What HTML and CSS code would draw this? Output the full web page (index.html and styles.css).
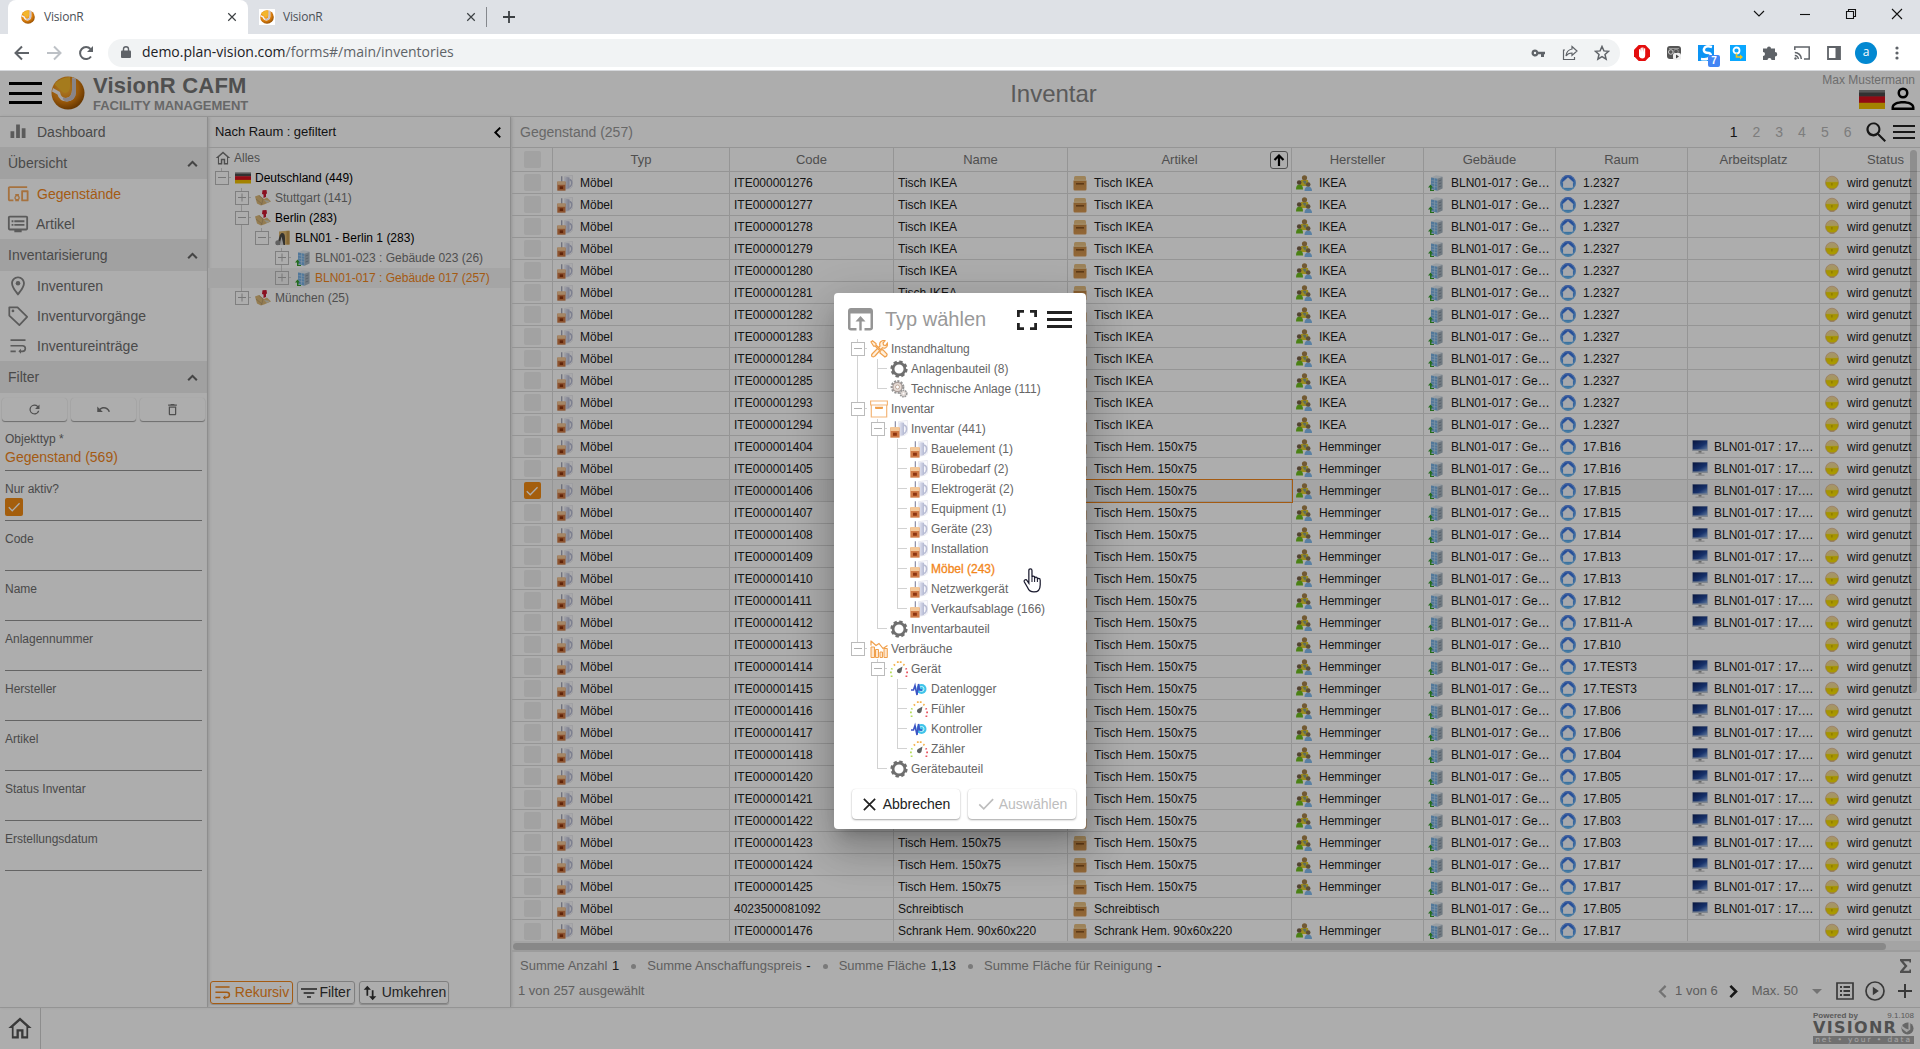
FILE: index.html
```html
<!DOCTYPE html>
<html lang="de">
<head>
<meta charset="utf-8">
<title>VisionR</title>
<link rel="stylesheet" href="styles.css">
</head>
<body>
<svg width="0" height="0" class="defs" aria-hidden="true">
  <defs>
    <radialGradient id="gOrb" cx=".4" cy=".35" r=".7"><stop offset="0" stop-color="#ffb83e"/><stop offset=".6" stop-color="#e0820f"/><stop offset="1" stop-color="#8e4a00"/></radialGradient>
    <linearGradient id="gBlue" x1="0" y1="0" x2="0" y2="1"><stop offset="0" stop-color="#2f62e0"/><stop offset="1" stop-color="#5cb6ee"/></linearGradient>
    <linearGradient id="gYel" x1="0" y1="0" x2="0" y2="1"><stop offset="0" stop-color="#f3d9a0"/><stop offset=".4" stop-color="#f6e08a"/><stop offset=".5" stop-color="#f2d800"/><stop offset="1" stop-color="#ffe800"/></linearGradient>
    <linearGradient id="gBox" x1="0" y1="0" x2="0" y2="1"><stop offset="0" stop-color="#c98c47"/><stop offset="1" stop-color="#d99a52"/></linearGradient>
    <linearGradient id="gScr" x1="0" y1="0" x2="1" y2="1"><stop offset="0" stop-color="#0c1f5c"/><stop offset=".6" stop-color="#234a9e"/><stop offset="1" stop-color="#8fb4e8"/></linearGradient>
    <linearGradient id="gSilver" x1="0" y1="0" x2="1" y2="0"><stop offset="0" stop-color="#f0f1fa"/><stop offset="1" stop-color="#b3b8d2"/></linearGradient>
  </defs>
  <symbol id="orb" viewBox="0 0 34 34"><circle cx="17" cy="17" r="16.500" fill="url(#gOrb)"/><path d="M2 12 9 16q1 6 6 6 6-1 6-8V1.500l4 1.300V16q-1 9-9 9.500Q8 25 6.500 18.500L1 15.500z" fill="#f3f1f4"/><path d="M21 2v12q0 7-6 8-2 0-3-1-1 4 4 4.500 9-1 9-9.500V3z" fill="#c9c3ca"/><path d="M3.500 8.500Q8 2 19 1v9q0 6-5 7-3-1-4.500-3z" fill="#f3b62c"/></symbol>
  <symbol id="flag" viewBox="0 0 16 11"><path d="M0 0h16v4H0z" fill="#4a4a4a"/><path d="M0 3.700h16v4H0z" fill="#d8101c"/><path d="M0 7.400h16V11H0z" fill="#f0c000"/><path d="M0 0h16v1.500H0z" fill="#fff" opacity=".3"/></symbol>
  <symbol id="mug" viewBox="0 0 16 16"><path d="M7.500 1.500 15.500.3v11.200l-2 2-6 1z" fill="#fafafd" stroke="#dcdce4" stroke-width=".5"/><path d="M7 2.500q3-1 5.500 0V13q-2.500 1.500-5.500.5z" fill="url(#gSilver)"/><path d="M12.500 4.500c3.500 1 2.500 6.500 0 7.500" fill="none" stroke="#b9bdd4" stroke-width="1.400"/><path d="M4.200 1.200h1.100v6H4.200z" fill="#8f91a8"/><path d="M.3 6.800h8.200v8.900H.3z" fill="#cf7a45"/><path d="M.3 6.300h8.200v3.500H.3z" fill="#f4c797"/><path d="M2.700 11.300h3.400v2.700H2.700z" fill="#8e3510"/></symbol>
  <symbol id="box" viewBox="0 0 16 16"><path d="M2 3q0-2 1.500-2h9Q14 1 14 3v3H2z" fill="#e8c184"/><path d="M1.500 5.500h13V14q0 1.500-1.300 1.500H2.800Q1.500 15.500 1.500 14z" fill="url(#gBox)"/><path d="M4 8h8v1.600H4z" fill="#8a5522"/><path d="M2 4.700h12v1H2z" fill="#f3d7a4"/></symbol>
  <symbol id="people" viewBox="0 0 16 16"><path d="M5 5h7l1 6H4z" fill="#e6cf2e"/><circle cx="8.500" cy="2.800" r="2.600" fill="#a9854a"/><path d="M0 14.500q0-5 3.500-5T7 14.500z" fill="#6fbf1e"/><circle cx="3.200" cy="7.500" r="2.300" fill="#7a6248"/><path d="M8.500 16q0-4.500 3.700-4.500T16 16z" fill="#84bdf0"/><circle cx="12.200" cy="9.500" r="2.300" fill="#8a7350"/><path d="M6.500 6h3.800l-1 4z" fill="#8aa38e"/></symbol>
  <symbol id="building" viewBox="0 0 16 16"><path d="M3 2.500 8 .3l6.500 1v12l-5 2.500L3 14z" fill="#e2e9ef"/><path d="M3 2.500 9.500 3.700v12L3 14z" fill="#78b2e4"/><path d="M9.500 3.700 14.500 2v11.500l-5 2.200z" fill="#a5b3bf"/><path d="M3.500 5.500l6 1M3.500 8.200l6 1M3.500 11l6 1M6.500 3v11.500" stroke="#c6dff4" stroke-width=".6"/><path d="M10.500 6l2.800-1M10.500 9l2.800-1M10.500 12l2.800-1" stroke="#7a8a98" stroke-width=".8"/><path d="M2.500 9.500 5 12.500H3.500V15H6v1H2v-3.500H0z" fill="#35a02c"/></symbol>
  <symbol id="room" viewBox="0 0 16 16"><circle cx="8" cy="8" r="7.900" fill="url(#gBlue)"/><circle cx="8" cy="8" r="7.200" fill="none" stroke="#8fc3f5" stroke-width=".6"/><path d="M8 2.800 13.200 7.600H12.400V12.300H3.600V7.600H2.800z" fill="#f4f8ff" stroke="#f4f8ff" stroke-width="1" stroke-linejoin="round"/></symbol>
  <symbol id="bulb" viewBox="0 0 16 16"><circle cx="8" cy="7.700" r="6.500" fill="url(#gYel)" stroke="#dca878" stroke-width=".6"/><path d="M7.300 8h1.200v2.500H7.300z" fill="#c9ab00"/><path d="M5 13.500h6l-1 1.200H6z" fill="#d8b48c"/></symbol>
  <symbol id="monitor" viewBox="0 0 16 16"><path d="M.2 1h15.600v11H.2z" fill="#b9c3d2"/><path d="M.8 1.500h14.400v9H.8z" fill="url(#gScr)"/><path d="M6.500 12h3v2h-3z" fill="#9a9a9a"/><path d="M3.500 13.500h9V15h-9z" fill="#d5d5d5"/></symbol>
  <symbol id="pinmap" viewBox="0 0 16 16"><path d="M0 6.500 4 5l5 4 3-1.500 4 4-7 3-3 1-4-2z" fill="#dcb878"/><path d="m4 5.500 4 3.500-1.500 6M1 9l6 5" stroke="#b39c70" stroke-width=".8" fill="none"/><path d="m9 10 6 1-3 2z" fill="#d4d4c6"/><path d="M7.500.3 11.500 0l.5 3.500-1 .5v3L8.500 8V4.500L7 4z" fill="#cc1930"/></symbol>
  <symbol id="site" viewBox="0 0 16 16"><path d="M4 1.500 14.500.5v14L4 15z" fill="#e0b970"/><path d="M11.500 1h3v13.500h-3z" fill="#c59a50"/><path d="M6.500 3q3.500-.5 3.500 5v7H1q2.500-3 3-7 .5-3.500 2.500-5z" fill="#4d4a45"/><path d="M6.500 6.500 8.500 15h-4z" fill="#d8d8d8"/><circle cx="2.800" cy="12.700" r="2.500" fill="#8f8f8f"/></symbol>
  <symbol id="home" viewBox="0 0 24 24"><path d="M12 3 2 12h3v9h6v-6h2v6h6v-9h3zM12 5.700l5.500 5V19H15v-6H9v6H6.500v-8.300z"/></symbol>
  <symbol id="all" viewBox="1 1 22 22"><path d="M12 3 2 12h3v9h6v-6h2v6h6v-9h3zM12 5.700l5.500 5V19H15v-6H9v6H6.500v-8.300z"/></symbol>
  <symbol id="bars" viewBox="0 0 24 24"><path d="M2 11h5v9H2zM9.500 2h5v18h-5zM17 7h5v13h-5z"/></symbol>
  <symbol id="devices" viewBox="0 0 24 24"><path d="M3 5.500h19v-2H3c-1.100 0-2 .9-2 2V18c0 1.100.9 2 2 2h4v-2H3zM13 12H9v1.780c-.61.550-1 1.330-1 2.220s.39 1.670 1 2.220V20h4v-1.780c.61-.550 1-1.340 1-2.220s-.39-1.670-1-2.220zm-2 5.500c-.83 0-1.500-.67-1.500-1.500s.67-1.500 1.500-1.500 1.500.67 1.500 1.500-.67 1.500-1.500 1.500zM22.500 8h-6c-.5 0-1 .5-1 1v10c0 .5.500 1 1 1h6c.5 0 1-.5 1-1V9c0-.5-.5-1-1-1zm-1 10h-4v-8h4z"/></symbol>
  <symbol id="dvr" viewBox="0 0 24 24"><path d="M21 3H3c-1.100 0-2 .9-2 2v12c0 1.100.9 2 2 2h5v2h8v-2h5c1.100 0 2-.9 2-2V5c0-1.100-.9-2-2-2zm0 14H3V5h18zm-2-9H8v2h11zm0 4H8v2h11zM7 8H5v2h2zm0 4H5v2h2z"/></symbol>
  <symbol id="place" viewBox="0 0 24 24"><path d="M12 1.500C7.800 1.500 4.500 4.800 4.500 9c0 5.500 7.500 13.500 7.500 13.500S19.500 14.500 19.500 9c0-4.200-3.300-7.500-7.500-7.500zM6.500 9c0-3 2.500-5.500 5.500-5.500s5.500 2.500 5.500 5.500c0 3-3 7.200-5.500 10.300C9.500 16.200 6.500 12 6.500 9z"/><circle cx="12" cy="9" r="2.500"/></symbol>
  <symbol id="tag" viewBox="0 0 24 24"><path d="M2.500 2.500h9L22 13l-8.500 9L2.500 11.500z" fill="none" stroke="currentColor" stroke-width="1.900" stroke-linejoin="round"/><circle cx="6.500" cy="6.500" r="1.500"/></symbol>
  <symbol id="wrap" viewBox="0 0 24 24"><path d="M2 3h20v2.200H2zM2 18h7v2.200H2zM2 10.500h16a4.400 4.400 0 0 1 0 9.700H16v2l-3.500-3.200 3.500-3.200v2.200h2a2.200 2.200 0 0 0 0-5.300H2z"/></symbol>
  <symbol id="up" viewBox="0 0 24 24"><path d="m4 17 8-8 8 8" fill="none" stroke="currentColor" stroke-width="3.800"/></symbol>
  <symbol id="left" viewBox="0 0 24 24"><path d="m17 3-9 9 9 9" fill="none" stroke="currentColor" stroke-width="3.600"/></symbol>
  <symbol id="right" viewBox="0 0 24 24"><path d="m7 3 9 9-9 9" fill="none" stroke="currentColor" stroke-width="4.200"/></symbol>
  <symbol id="refresh" viewBox="0 0 24 24"><path d="M17.650 6.350A8 8 0 1 0 19.730 14h-2.080A6 6 0 1 1 12 6c1.660 0 3.140.69 4.220 1.780L13 11h7V4z"/></symbol>
  <symbol id="undo" viewBox="0 0 24 24"><path d="M12.500 8c-2.650 0-5.050.99-6.900 2.600L2 7v9h9l-3.620-3.620c1.390-1.160 3.160-1.880 5.120-1.880 3.540 0 6.550 2.310 7.600 5.500l2.370-.78C21.080 11.030 17.150 8 12.500 8z"/></symbol>
  <symbol id="trash" viewBox="0 0 24 24"><path d="M6 19c0 1.100.9 2 2 2h8c1.100 0 2-.9 2-2V7H6zM8 9h8v10H8zm7.500-5-1-1h-5l-1 1H5v2h14V4z"/></symbol>
  <symbol id="check" viewBox="0 0 24 24"><path d="m3 12.500 6 6L21.500 5.500" fill="none" stroke="currentColor" stroke-width="2.200"/></symbol>
  <symbol id="search" viewBox="0 0 24 24"><path d="M15.500 14h-.8a7 7 0 1 0-.7.700v.8l6.500 6.500 1.500-1.500zM9.500 14a4.900 4.900 0 1 1 0-9.800 4.900 4.900 0 0 1 0 9.800z"/></symbol>
  <symbol id="person" viewBox="0 0 24 24"><path d="M12 .5a5.500 5.500 0 1 0 0 11 5.500 5.500 0 0 0 0-11zM12 3a3 3 0 1 1 0 6 3 3 0 0 1 0-6zM.5 23v-2.500c0-4.500 6-6.500 11.500-6.500s11.500 2 11.500 6.500V23zM3 20.500h18c0-2.500-4-4-9-4s-9 1.500-9 4z"/></symbol>
  <symbol id="filter" viewBox="0 0 24 16"><path d="M0 1h24v2.200H0zM4 7h16v2.200H4zM9 13h6v2.200H9z"/></symbol>
  <symbol id="swap" viewBox="0 0 24 24"><path d="M8 1 2.500 7H6.700v9h2.600V7h4.200zM16 23l5.500-6h-4.200V8h-2.600v9h-4.200z"/></symbol>
  <symbol id="openin" viewBox="0 0 25 23"><path d="M22 0H3C1.300 0 0 1.300 0 3v17c0 1.500 1.300 2.500 3 2.500h5.500V20H2.500V5.500h20V20h-6v2.500H22c1.700 0 3-1 3-2.500V3c0-1.700-1.300-3-3-3zM12.500 8 7.500 13.500h3.800V22.500h2.400V13.500h3.800z"/></symbol>
  <symbol id="full" viewBox="0 0 20 20"><path d="M0 0h7v2.800H2.800V7H0zM13 0h7v7h-2.800V2.800H13zM0 13h2.800v4.200H7V20H0zM17.200 13H20v7h-7v-2.800h4.200z"/></symbol>
  <symbol id="close" viewBox="0 0 24 24"><path d="M3 3 21 21M21 3 3 21" fill="none" stroke="currentColor" stroke-width="2.800"/></symbol>
  <symbol id="tools" viewBox="0 0 18 18"><g fill="#fff0dd" stroke="#f0a04c" stroke-width="1.200"><path d="M11 1.500q2-1.500 4-.8L13 3l.5 2 2.200.5L17.300 3q.7 4-2 5-1.500.5-2.800-.2L5 16q-1.200 1.500-3 .5-1-1.500.5-3L10 6Q9 3 11 1.500z"/><path d="m1 2 1.500-1.200L6 3.500 6 5l5 5 1.800-.3L17 14q.5 2-2 3l-5-4 .2-1.800-5-5H3.700z"/></g></symbol>
  <symbol id="gear" viewBox="0 0 18 18"><circle cx="9" cy="9" r="7" fill="none" stroke="#6f6f6f" stroke-width="3.200" stroke-dasharray="3.200 2.298"/><circle cx="9" cy="9" r="5.900" fill="none" stroke="#6f6f6f" stroke-width="2.700"/></symbol>
  <symbol id="gears" viewBox="0 0 18 18"><circle cx="7.500" cy="7" r="5.600" fill="none" stroke="#959595" stroke-width="2.600" stroke-dasharray="2 1.200"/><circle cx="7.500" cy="7" r="4.600" fill="#e6dcd6" stroke="#a89c98" stroke-width="1.200"/><circle cx="7.500" cy="7" r="2" fill="#fff" stroke="#b49a8a" stroke-width=".8"/><circle cx="13.500" cy="13.500" r="3.300" fill="#ded6d2" stroke="#979797" stroke-width="1.600" stroke-dasharray="1.600 .8"/><circle cx="13.500" cy="13.500" r="1" fill="#fff"/></symbol>
  <symbol id="archive" viewBox="0 0 18 18"><path d="M.6 1h16.800v4H.6zM1.300 5h15.400v12H1.300z" fill="#fff" stroke="#f3b678" stroke-width="1.200"/><path d="M5 6.800h8v1.500q0 .7-1 .7H6q-1 0-1-.7z" fill="#f0a04c"/></symbol>
  <symbol id="chart" viewBox="0 0 18 18"><path d="M1 7h3.500v10.500H1zM5.500 9.500h3v8h-3zM10 12h2.500v5.500H10zM14 8.500h3.300v9H14z" fill="#ffe6cc" stroke="#f0a04c"/><path d="M1 .5v5M1 1l5 4.500L9 3.500l4 5 4.500-3" fill="none" stroke="#f0a04c" stroke-width="1.200"/></symbol>
  <symbol id="gauge" viewBox="0 0 18 18"><path d="M1.600 17v-1.600M.9 13.300v-1.800M1.600 9.500l.4-1.300" stroke="#b5dc5a" stroke-width="1.800"/><path d="M3.800 5.500 5 4.300M7.800 3V1.200M10.700 3V1.200M13.300 4.300l1.200 1" stroke="#f6b24e" stroke-width="1.800"/><path d="M16 8.200l.4 1.300M17.100 11.500v1.800M16.400 15.400V17" stroke="#ea5560" stroke-width="1.800"/><path d="m12.500 6.500-1 5A2.300 2.300 0 1 1 8 9z" fill="#5d6061"/></symbol>
  <symbol id="pulse" viewBox="0 0 18 18"><circle cx="11.500" cy="9" r="5" fill="#3fc4ea"/><circle cx="11.500" cy="9" r="2.500" fill="none" stroke="#c8f2fb"/><path d="M1 10h2.500L5 5.500l2 9.500 1.500-11 1 6H12" fill="none" stroke="#3b53c4" stroke-width="1.600"/></symbol>
</svg>

<div class="browser">
  <div class="tabstrip">
    <div class="tab active"><svg class="fav"><use href="#orb"/></svg><span class="tab-title">VisionR</span><svg class="x"><use href="#close"/></svg></div>
    <div class="tab"><span class="favbg"><svg class="fav"><use href="#orb"/></svg></span><span class="tab-title">VisionR</span><svg class="x"><use href="#close"/></svg></div>
    <i class="tabsep"></i>
    <svg class="plus" viewBox="0 0 12 12"><path d="M6 0v12M0 6h12" stroke="#3c4043" stroke-width="1.800"/></svg>
    <div class="wincontrols">
      <svg width="12" height="12" viewBox="0 0 12 12"><path d="m1 3 5 5 5-5"/></svg>
      <svg width="12" height="12" viewBox="0 0 12 12"><path d="M1 6.500h10"/></svg>
      <svg width="12" height="12" viewBox="0 0 12 12"><path d="M1.500 3.500h7v7h-7zM3.500 3.500v-2h7v7h-2"/></svg>
      <svg width="12" height="12" viewBox="0 0 12 12"><path d="m1 1 10 10M11 1 1 11"/></svg>
    </div>
  </div>
  <div class="toolbar">
    <div class="nav">
      <svg width="16" height="16" viewBox="0 0 16 16"><path d="M15 8H2M8 1.500 1.500 8 8 14.500" fill="none" stroke="#5f6368" stroke-width="2"/></svg>
      <svg width="16" height="16" viewBox="0 0 16 16"><path d="M1 8h13M8 1.500 14.500 8 8 14.500" fill="none" stroke="#bdc1c6" stroke-width="2"/></svg>
      <svg width="16" height="16" viewBox="0 0 16 16"><path d="M13 11.500A6 6 0 1 1 12.500 4" fill="none" stroke="#5f6368" stroke-width="2"/><path d="M15 1v6H9z" fill="#5f6368"/></svg>
    </div>
    <div class="url">
      <svg width="10" height="12" viewBox="0 0 10 12"><path d="M1 4.500h8q1 0 1 1V11q0 1-1 1H1q-1 0-1-1V5.500q0-1 1-1z" fill="#5f6368"/><path d="M2.500 5V3q0-2.200 2.500-2.200T7.500 3v2" fill="none" stroke="#5f6368" stroke-width="1.400"/></svg>
      <span class="addr">demo.plan-vision.com<span>/forms#/main/inventories</span></span>
      <div class="urlicons">
        <svg width="16" height="16" viewBox="0 0 16 16"><path d="M5 4.500A3.500 3.500 0 1 0 8.300 9.300H11V12h3V9.300h1V6.700H8.300A3.500 3.500 0 0 0 5 4.500zm0 2.300a1.200 1.200 0 1 1 0 2.400 1.200 1.200 0 0 1 0-2.400z" fill="#5f6368"/></svg>
        <svg width="16" height="16" viewBox="0 0 16 16"><path d="M3 5H1.500v9.500h11V12M10 1.500l5 4.500-5 4.500V8Q6 8 4 11q.5-6 6-7z" fill="none" stroke="#5f6368" stroke-width="1.200"/></svg>
        <svg width="16" height="16" viewBox="0 0 16 16"><path d="m8 1.500 1.900 4.400 4.700.4L11 9.400l1.100 4.700L8 11.600l-4.100 2.500L5 9.400 1.400 6.300l4.700-.4z" fill="none" stroke="#5f6368" stroke-width="1.500"/></svg>
      </div>
    </div>
    <div class="exts">
      <svg width="16" height="16" viewBox="0 0 16 16"><path d="M4.700 0h6.600L16 4.700v6.600L11.300 16H4.700L0 11.300V4.700z" fill="#e40d0d"/><path d="M5 8V4.500q.7-.8 1.300 0V7l.3-4q.7-.8 1.300 0V7l.3-4.300q.7-.7 1.300 0L9.700 7l.3-3.500q.7-.6 1.200 0V10q0 3.500-3 3.500-2 0-3.200-2z" fill="#fff"/></svg>
      <svg width="16" height="16" viewBox="0 0 16 16"><rect x="1" y="1" width="14" height="13" rx="3" fill="#555"/><circle cx="4.800" cy="7" r="2.300" fill="none" stroke="#ccc"/><circle cx="10" cy="6.500" r="2.300" fill="none" stroke="#999"/><path d="M3 3.500h10" stroke="#999"/><rect x="7" y="8" width="8" height="7" rx="2" fill="#eee"/><path d="m10 9.500 3 2-3 2z" fill="#444"/></svg>
      <span class="badged"><svg width="16" height="16" viewBox="0 0 16 16"><path d="M0 0h16v16H0z" fill="#0c94f4"/><path d="M14 2Q7 0 6 4t5 4q3 1 1 4t-9 2" fill="none" stroke="#fff" stroke-width="2.500"/></svg><b>7</b></span>
      <svg width="16" height="16" viewBox="0 0 16 16"><path d="M0 0h16v16H0z" fill="#0aa7ff"/><circle cx="6.500" cy="5.500" r="3" fill="none" stroke="#fff" stroke-width="1.800"/><path d="M6.500 8.500V12H11" fill="none" stroke="#f5c518" stroke-width="1.600"/><path d="m10 9.500 3 2.500-3 2.500z" fill="#f5c518"/></svg>
      <svg width="16" height="16" viewBox="0 0 16 16"><path d="M5 3.500a2 2 0 0 1 4 0h4V7a2 2 0 0 1 0 4.500V15H9.500a2 2 0 0 0-4 0H1v-4a2 2 0 0 0 0-4V3.500z" fill="#5f6368"/></svg>
      <svg width="16" height="16" viewBox="0 0 16 16"><path d="M.8 5V2h14.400v12H10M.8 7.500A6.500 6.500 0 0 1 7.300 14M.8 10.500A3.500 3.500 0 0 1 4.300 14" fill="none" stroke="#5f6368" stroke-width="1.500"/><circle cx="1.500" cy="13.500" r="1.200" fill="#5f6368"/></svg>
      <svg width="16" height="16" viewBox="0 0 16 16"><path d="M2 2h12v12H2z" fill="none" stroke="#5f6368" stroke-width="1.800"/><path d="M9.500 2H14v12H9.500z" fill="#5f6368"/></svg>
      <span class="avatar">a</span>
      <svg width="4" height="16" viewBox="0 0 4 16"><g fill="#5f6368"><circle cx="2" cy="3" r="1.600"/><circle cx="2" cy="8" r="1.600"/><circle cx="2" cy="13" r="1.600"/></g></svg>
    </div>
  </div>
</div>

<div class="app">
  <header class="head">
    <i class="burger big"></i>
    <svg class="logo"><use href="#orb"/></svg>
    <div class="brand"><b>VisionR CAFM</b><span>FACILITY MANAGEMENT</span></div>
    <h1>Inventar</h1>
    <div class="user"><span>Max Mustermann</span><div><svg class="uflag" viewBox="0 0 16 11" preserveAspectRatio="none"><use href="#flag" width="16" height="11"/></svg><svg class="uicon"><use href="#person"/></svg></div></div>
  </header>

  <div class="cols">
    <aside class="side">
      <a class="item"><svg><use href="#bars"/></svg>Dashboard</a>
      <div class="section">Übersicht<svg><use href="#up"/></svg></div>
      <a class="item on wide"><svg><use href="#devices"/></svg>Gegenstände</a>
      <a class="item wide art"><svg><use href="#dvr"/></svg>Artikel</a>
      <div class="section">Inventarisierung<svg><use href="#up"/></svg></div>
      <a class="item wide"><svg><use href="#place"/></svg>Inventuren</a>
      <a class="item wide"><svg><use href="#tag"/></svg>Inventurvorgänge</a>
      <a class="item"><svg><use href="#wrap"/></svg>Inventureinträge</a>
      <div class="section">Filter<svg><use href="#up"/></svg></div>
      <div class="fbtns"><button><svg><use href="#refresh"/></svg></button><button><svg><use href="#undo"/></svg></button><button><svg><use href="#trash"/></svg></button></div>
      <div class="field"><label>Objekttyp *</label><span class="val">Gegenstand (569)</span></div>
      <div class="field"><label>Nur aktiv?</label><span class="cb on"><svg><use href="#check"/></svg></span></div>
      <div class="field"><label>Code</label></div>
      <div class="field"><label>Name</label></div>
      <div class="field"><label>Anlagennummer</label></div>
      <div class="field"><label>Hersteller</label></div>
      <div class="field"><label>Artikel</label></div>
      <div class="field"><label>Status Inventar</label></div>
      <div class="field"><label>Erstellungsdatum</label></div>
    </aside>

    <section class="rooms">
      <div class="bar">Nach Raum : gefiltert<svg><use href="#left"/></svg></div>
      <div class="tree" id="roomTree"></div>
      <div class="rbtns">
        <button class="on"><svg width="17" height="17"><use href="#wrap"/></svg>Rekursiv</button>
        <button class="f"><svg width="16" height="12"><use href="#filter"/></svg>Filter</button>
        <button class="u"><svg width="16" height="16"><use href="#swap"/></svg>Umkehren</button>
      </div>
    </section>

    <main class="main">
      <div class="bar"><span class="cap">Gegenstand (257)</span>
        <div class="pages"><b>1</b><span>2</span><span>3</span><span>4</span><span>5</span><span>6</span></div>
        <svg class="srch"><use href="#search"/></svg><i class="burger mid"></i></div>
      <div class="gridwrap">
        <table>
          <colgroup><col class="c0"><col class="c1"><col class="c2"><col class="c3"><col class="c4"><col class="c5"><col class="c5"><col class="c5"><col class="c5"><col class="c5"></colgroup>
          <thead><tr><th><span class="cb"></span></th><th>Typ</th><th>Code</th><th>Name</th><th class="sorted">Artikel<i class="sort"><svg viewBox="0 0 12 12" width="12" height="12"><path d="M6 12V2M1.500 6 6 1.500 10.500 6" fill="none" stroke="#000" stroke-width="2.200"/></svg></i></th><th>Hersteller</th><th>Gebäude</th><th>Raum</th><th>Arbeitsplatz</th><th>Status</th></tr></thead>
          <tbody id="rows"></tbody>
        </table>
        <i class="vbar"></i>
      </div>
      <div class="hbar"><i></i></div>
      <div class="sums">
        <span>Summe Anzahl <b>1</b></span><i></i><span>Summe Anschaffungspreis <b>-</b></span><i></i><span>Summe Fläche <b>1,13</b></span><i></i><span>Summe Fläche für Reinigung <b>-</b></span>
        <svg class="sigma" width="11" height="14" viewBox="0 0 11 14"><path d="M10.500 3.500V1.200H1L6 7 1 12.800h9.500v-2.300" fill="none" stroke="#757575" stroke-width="2.300"/></svg>
      </div>
      <div class="pager">
        <span>1 von 257 ausgewählt</span>
        <svg class="pl"><use href="#left"/></svg><span class="pn">1 von 6</span><svg class="pr"><use href="#right"/></svg>
        <span class="mx">Max. 50</span><i class="caret"></i>
        <svg width="18" height="18" viewBox="0 0 18 18" class="li"><path d="M1 1h16v16H1z" fill="none" stroke="#555" stroke-width="1.700"/><path d="M4 5h2M4 9h2M4 13h2M7.500 5H14M7.500 9H14M7.500 13H14" stroke="#555" stroke-width="1.800"/></svg>
        <svg width="20" height="20" viewBox="0 0 20 20" class="pi"><circle cx="10" cy="10" r="9" fill="none" stroke="#555" stroke-width="1.700"/><path d="m7.800 5.700 6 4.300-6 4.300z" fill="#555"/></svg>
        <svg width="14" height="14" viewBox="0 0 14 14" class="ai"><path d="M7 0v14M0 7h14" stroke="#555" stroke-width="2"/></svg>
      </div>
    </main>
  </div>

  <footer class="foot">
    <div class="fhome"><svg><use href="#home"/></svg></div>
    <div class="powered">
      <div class="pw"><b>Powered by</b><span>9.1.108</span></div>
      <div class="vr"><b>VISIONR</b><svg viewBox="0 0 14 14" width="13" height="13"><circle cx="7" cy="7" r="6.500" fill="#999"/><path d="M1 4 5 7l3 1V1h2v7l-4 3-5-4z" fill="#f2f2f2"/></svg></div>
      <div class="nyd">net • your • data</div>
    </div>
  </footer>

  <div class="overlay">
    <div class="dialog">
      <div class="dhead"><svg class="oi"><use href="#openin"/></svg><h2>Typ wählen</h2><svg class="fs"><use href="#full"/></svg><i class="burger dlg"></i></div>
      <div class="tree dtree" id="typeTree"></div>
      <div class="dbtns"><button><svg width="15" height="15"><use href="#close"/></svg>Abbrechen</button><button class="off"><svg width="18" height="18"><use href="#check"/></svg>Auswählen</button></div>
    </div>
    <svg class="cursor" viewBox="0 0 18 24"><path d="M5.500 14.500V2.500q0-1.700 1.500-1.700t1.500 1.700V9q0-1.200 1.300-1.200T11 9v.8q.3-1 1.400-1t1.300 1.200v.8q.3-.8 1.200-.8 1.500 0 1.500 1.700V16q0 7-6 7-4.500 0-6-4L1.200 13.500q-.7-1.700.8-2.200 1.200-.3 2 1z" fill="#fff" stroke="#1a1a2e" stroke-width="1.200"/><path d="M8.500 9v4.500M11 9.500v4M13.700 10.500v3" stroke="#1a1a2e"/></svg>
  </div>
</div>
<script src="script.js"></script>
</body>
</html>
```
FILE: styles.css
```css
* { box-sizing: border-box; }
body { margin: 0; width: 1920px; height: 1049px; overflow: hidden; background: #fff; font: 12px/1.2 "Liberation Sans", Arial, sans-serif; color: #1c1c1c; display: flex; flex-direction: column; }
svg { display: block; flex: none; fill: currentColor; }
i, a { display: block; font-style: normal; }
button { font: inherit; background: none; border: 0; padding: 0; color: inherit; display: flex; align-items: center; justify-content: center; }
.defs { position: absolute; }

/* browser chrome */
.browser { height: 71px; flex: none; border-bottom: 1px solid #d6d8dc; font-family: "Open Sans", "Noto Sans", sans-serif; }
.tabstrip { height: 34px; background: #dee1e6; display: flex; align-items: center; padding-left: 8px; }
.tab { width: 239px; height: 34px; display: flex; align-items: center; padding: 0 11px 0 13px; color: #4b5057; }
.tab.active { width: 240px; background: #fff; border-radius: 8px 8px 0 0; }
.tab:not(.active) { padding-left: 11px; }
.fav { width: 14px; height: 14px; }
.favbg { background: #fff; padding: 1px; }
.tab-title { flex: 1; margin-left: 9px; font-size: 12px; letter-spacing: -.2px; }
.favbg + .tab-title { margin-left: 8px; }
.x { width: 10px; height: 10px; color: #3c4043; }
.tabsep { width: 1px; height: 20px; background: #85888d; margin-left: -1px; }
.plus { width: 12px; height: 12px; margin-left: 16px; }
.wincontrols { margin-left: auto; display: flex; gap: 34px; padding: 0 17px 6px 0; }
.wincontrols path { fill: none; stroke: #111; stroke-width: 1.100; }
.toolbar { height: 36px; display: flex; align-items: center; padding-top: 2px; }
.nav { width: 108px; display: flex; gap: 16px; padding-left: 14px; }
.url { width: 1512px; height: 28px; border-radius: 14px; background: #f1f3f4; display: flex; align-items: center; padding: 0 10px 0 13px; }
.url > svg { margin: 0 0 2px; }
.addr { margin: -2px 0 0 11px; font-size: 14px; color: #202124; white-space: nowrap; letter-spacing: -.02px; }
.addr span { color: #5f6368; }
.urlicons { margin-left: auto; display: flex; gap: 16px; }
.exts { display: flex; align-items: center; gap: 16px; padding-left: 14px; }
.exts .badged { position: relative; }
.badged b { position: absolute; left: 10px; top: 10px; width: 12px; height: 12px; border-radius: 2px; background: #4285f4; color: #fff; font: bold 10px/12px "Liberation Sans", sans-serif; text-align: center; }
.avatar { width: 22px; height: 22px; margin: 0 2px 0 -3px; border-radius: 50%; background: #0288d1; color: #fff; font-size: 12px; line-height: 20px; text-align: center; }

/* app frame */
.app { position: relative; height: 978px; display: flex; flex-direction: column; }
.head { height: 46px; flex: none; border-bottom: 1px solid #dcdcdc; display: flex; align-items: flex-start; padding-left: 9px; }
.burger { height: 22px; border: solid #000; border-width: 3px 0; display: flex; align-items: center; }
.burger::before { content: ""; width: 100%; height: 3px; background: currentColor; }
.big { width: 33px; margin-top: 11px; color: #000; }
.logo { width: 34px; height: 34px; margin: 5px 0 0 9px; }
.brand { width: 400px; margin-left: 8px; color: #757575; display: flex; flex-direction: column; }
.brand b { font-size: 22px; line-height: 22px; margin-top: 4px; letter-spacing: .2px; }
.brand span { font-weight: bold; font-size: 13px; line-height: 15px; margin-top: 1px; color: #999; letter-spacing: -.03px; }
.head h1 { margin: 9px 0 0; font: 24px/28px "Liberation Sans", Arial, sans-serif; color: #858585; width: 1121px; text-align: center; }
.user { margin-left: auto; padding-right: 5px; color: #a2a2a2; display: flex; flex-direction: column; align-items: flex-end; }
.user > span { line-height: 14px; margin-top: 2px; }
.user > div { display: flex; gap: 6px; align-items: center; }
.uflag { width: 26px; height: 19px; margin-top: 1px; }
.uicon { width: 24px; height: 24px; color: #000; }
.cols { flex: 1; min-height: 0; display: flex; isolation: isolate; }
.side { width: 208px; border-right: 1px solid #cfcfcf; font-size: 14px; color: #6d6d6d; box-shadow: 1px 0 3px #d8d8d8; }
.item { height: 30px; display: flex; align-items: center; padding-left: 9px; }
.item svg { width: 18px; height: 18px; margin-right: 10px; color: #868686; }
.item.wide { padding-left: 7px; }
.item.wide svg { width: 22px; height: 22px; margin-right: 8px; }
.item.art svg { margin-right: 7px; }
.item.on, .item.on svg { color: #f2861b; }
.item.on svg { opacity: .7; }
.section { height: 32px; background: #ededed; display: flex; align-items: center; justify-content: space-between; padding: 0 8px; }
.section svg { width: 13px; height: 13px; color: #666; }
.fbtns { display: flex; justify-content: space-between; padding: 5px 2px 0; height: 37px; margin-bottom: 1px; }
.fbtns button { width: 65px; height: 23px; border-radius: 3px; box-shadow: 0 1px 1px #a0a0a0, 0 0 1px #ddd; }
.fbtns svg { width: 15px; height: 15px; color: #777; }
.field { height: 50px; margin: 0 5px; border-bottom: 1px solid #949494; display: flex; flex-direction: column; }
.fbtns + .field { height: 40px; }
.field label { font-size: 12px; line-height: 14px; margin-top: 11px; }
.fbtns + .field label { margin-top: 1px; }
.val { color: #f2861b; line-height: 16px; margin-top: 3px; }
.cb { width: 17px; height: 17px; border-radius: 2px; background: #efefef; display: flex; align-items: center; justify-content: center; margin: 0 auto; }
.cb.on { background: #f28b14; color: #fff; }
.cb svg { width: 14px; height: 14px; margin: 0; }
.field .cb { width: 18px; height: 18px; margin: 2px 0 0; }

.rooms { width: 303px; border-right: 1px solid #cfcfcf; display: flex; flex-direction: column; box-shadow: 1px 0 3px #d8d8d8; }
.bar { height: 31px; flex: none; border-bottom: 1px solid #dcdcdc; display: flex; align-items: center; padding: 0 6px 0 7px; color: #1c1c1c; }
.rooms .bar { font-size: 13px; letter-spacing: -.05px; }
.rooms .bar svg { width: 13px; height: 13px; margin-left: auto; color: #000; }
.tree .row { height: 20px; display: flex; align-items: center; color: #757575; white-space: nowrap; }
.tree .row.dark { color: #000; }
.tree .row.sel { color: #f2861b; }
.rooms .sel { background: #f3f3f3; }
.tree .g { width: 20px; height: 20px; flex: none; position: relative; }
.tree .g::before, .tree .g::after { content: ""; position: absolute; background: #d2d2d2; }
.tree .v::before, .tree .t::before { left: 6px; top: 0; width: 1px; height: 20px; }
.tree .l::before { left: 6px; top: 0; width: 1px; height: 10px; }
.tree .t::after, .tree .l::after { left: 6px; top: 9px; width: 10px; height: 1px; }
.tree .g em { position: absolute; z-index: 1; left: 0; top: 3px; width: 14px; height: 14px; border: 1px solid #bbb; background: #fff; }
.tree .g em::before, .tree .g em.p::after { content: ""; position: absolute; left: 2px; top: 5px; width: 8px; height: 1px; background: #b0b0b0; }
.tree .g em.p::after { transform: rotate(90deg); }
.rooms .sel em { background: #f3f3f3; }
.tree .row > svg { width: 16px; height: 16px; margin-right: 4px; }
#roomTree .row { padding-left: 7px; }
#roomTree .row.all > svg { margin-right: 3px; }
.rbtns { margin-top: auto; display: flex; gap: 4px; padding: 0 0 3px 2px; font-size: 14px; color: #333; }
.rbtns button { height: 23px; width: 83px; border: 1px solid #bbb; border-radius: 3px; gap: 4px; box-shadow: 0 1px 1px #ccc; }
.rbtns .f { width: 58px; gap: 2px; }
.rbtns .u { width: 90px; }
.rbtns .on { color: #f2861b; border-color: #f2861b; }

.main { flex: 1; min-width: 0; display: flex; flex-direction: column; overflow: hidden; padding-left: 1px; }
.main .bar { padding: 0 5px 0 8px; }
.cap { font-size: 14px; color: #999; }
.pages { margin-left: auto; display: flex; font-size: 14px; color: #b8b8b8; padding-right: 5px; }
.pages > * { width: 22.800px; text-align: center; font-weight: normal; }
.pages b { color: #222; }
.srch { width: 24px; height: 24px; color: #222; margin-right: 5px; }
.mid { width: 22px; height: 14px; border-width: 2px 0; color: #222; border-color: #222; }
.mid::before { height: 2px; }
.gridwrap { height: 793px; overflow: hidden; position: relative; }
table { table-layout: fixed; border-collapse: separate; border-spacing: 0; width: 1440px; }
.c0 { width: 41px; } .c1 { width: 177px; } .c2 { width: 164px; } .c3 { width: 174px; } .c4 { width: 224px; } .c5 { width: 132px; }
th, td { height: 22px; padding: 0; border: solid #dcdcdc; border-width: 0 1px 1px 0; }
th { height: 24px; font-weight: normal; font-size: 13px; color: #757575; }
.sorted { position: relative; }
.sort { position: absolute; right: 3px; top: 3px; width: 18px; height: 18px; border: 1px solid #777; border-radius: 3px; padding: 2px; }
td > div { height: 20px; padding: 0 4px; display: flex; align-items: center; }
td span.t { white-space: nowrap; padding-top: 1px; }
td svg { width: 16px; height: 16px; margin-right: 7px; }
td:nth-child(5) svg { margin-right: 6px; }
td:nth-child(9) svg { margin-right: 6px; }
tr.sel td { background: #f3f3f3; }
tr.sel td.cur { position: relative; box-shadow: 0 0 0 1px #f2861b; }
tbody tr:last-child td { border-bottom: 0; }
.vbar { position: absolute; right: 3px; top: 2px; width: 7px; height: 543px; border-radius: 4px; background: rgba(0,0,0,.18); }
.hbar { height: 11px; background: #f2f2f2; border-bottom: 2px solid #e6e6e6; padding: 2px 0 0 1px; }
.hbar i { width: 1373px; height: 7px; border-radius: 4px; background: #c9c9c9; }
.sums { display: flex; align-items: center; height: 28px; padding: 0 9px 0 8px; font-size: 13px; color: #8d8d8d; white-space: nowrap; }
.sums b { font-weight: normal; color: #222; margin-left: 1px; }
.sums i { width: 5px; height: 5px; border-radius: 50%; background: #b4b4b4; margin: 0 11px 0 12px; }
.sigma { margin-left: auto; }
.pager { display: flex; align-items: center; height: 22px; padding: 0 8px 0 6px; font-size: 13px; color: #8d8d8d; }
.pl, .pr { width: 15px; height: 15px; }
.pl { margin-left: auto; color: #aaa; }
.pn { margin: 0 8px 0 5px; color: #8a8a8a; }
.pr { color: #222; }
.mx { margin-left: 11px; }
.caret { border: 5px solid transparent; border-top-color: #aaa; margin: 0 14px; border-bottom: 0; }
.pi { margin: 0 13px 0 11px; }
.foot { height: 42px; flex: none; border-top: 1px solid #dcdcdc; display: flex; justify-content: space-between; }
.fhome { width: 41px; border-right: 1px solid #d0d0d0; padding: 6px 0 0 6px; color: #555; }
.fhome svg { width: 28px; height: 28px; }
.powered { width: 101px; margin-right: 6px; padding-top: 3px; color: #858585; }
.pw { display: flex; justify-content: space-between; font-size: 8px; line-height: 10px; }
.vr { display: flex; justify-content: space-between; align-items: center; height: 14px; }
.vr b { font: bold 16px/14px "DejaVu Sans", sans-serif; letter-spacing: 1.300px; color: #777; }
.nyd { height: 8px; background: #a5a5a5; color: #f4f4f4; font: 7.500px/7px "DejaVu Sans", sans-serif; letter-spacing: 1.900px; text-align: center; margin-top: 1px; white-space: nowrap; }

/* modal */
.overlay { position: absolute; inset: 0; background: rgba(0,0,0,.32); }
.dialog { position: absolute; left: 834px; top: 222px; width: 252px; height: 536px; border-radius: 4px; background: #fff; padding: 11px 10px 10px 17px; box-shadow: 0 11px 15px -7px rgba(0,0,0,.2), 0 24px 38px 3px rgba(0,0,0,.14), 0 9px 46px 8px rgba(0,0,0,.12); }
.dhead { height: 35px; display: flex; align-items: flex-start; margin-left: -3px; }
.oi { width: 25px; height: 23px; color: #959595; margin-top: 4px; }
.dhead h2 { margin: 3px 0 0 12px; font: 20px/24px "Liberation Sans", Arial, sans-serif; color: #999; width: 132px; white-space: nowrap; }
.fs { width: 20px; height: 20px; margin-top: 6px; color: #222; }
.dlg { width: 25px; height: 17px; margin: 7px 0 0 10px; border-color: #222; color: #222; }
.dtree .row { color: #666; }
.dtree .row.sel { color: #f2861b; -webkit-text-stroke: .3px #f2861b; }
.dtree .row > svg { width: 18px; height: 18px; margin: 0 3px 0 -1px; }
.dbtns { display: flex; gap: 8px; margin: 10px 0 0 1px; }
.dbtns button { width: 108px; height: 30px; border-radius: 4px; font-size: 14px; gap: 6px; color: #222; box-shadow: 0 1px 2px rgba(0,0,0,.35), 0 0 1px rgba(0,0,0,.1); }
.dbtns .off { color: #bdbdbd; gap: 4px; }
.cursor { position: absolute; left: 1023px; top: 497px; width: 19px; height: 25px; }
```
FILE: script.js
```js
const icon = (name) => `<svg><use href="#${name}"/></svg>`;

// Each node: guide cells, icon, label, row class.
// Guides: v = line, t = branch, l = last branch, - / + = toggle,
// = / # = toggle on the last branch, space = blank
function tree(id, nodes) {
  document.getElementById(id).innerHTML = nodes.map(([guides, ic, label, cls = ""]) => {
    const cells = [...guides].map((g) => {
      if (g === "-" || g === "+") return `<span class="g t"><em class="${g === "+" ? "p" : ""}"></em></span>`;
      if (g === "=" || g === "#") return `<span class="g l"><em class="${g === "#" ? "p" : ""}"></em></span>`;
      return `<span class="g ${g}"></span>`;
    }).join("");
    return `<div class="row ${cls}">${cells}${icon(ic)}${label}</div>`;
  }).join("");
}

tree("roomTree", [
  ["", "all", "Alles", "all"],
  ["=", "flag", "Deutschland (449)", "dark"],
  [" +", "pinmap", "Stuttgart (141)"],
  [" -", "pinmap", "Berlin (283)", "dark"],
  [" v=", "site", "BLN01 - Berlin 1 (283)", "dark"],
  [" v +", "building", "BLN01-023 : Gebäude 023 (26)"],
  [" v #", "building", "BLN01-017 : Gebäude 017 (257)", "sel"],
  [" #", "pinmap", "München (25)"],
]);

tree("typeTree", [
  ["-", "tools", "Instandhaltung"],
  ["vt", "gear", "Anlagenbauteil (8)"],
  ["vl", "gears", "Technische Anlage (111)"],
  ["-", "archive", "Inventar"],
  ["v-", "mug", "Inventar (441)"],
  ["vvt", "mug", "Bauelement (1)"],
  ["vvt", "mug", "Bürobedarf (2)"],
  ["vvt", "mug", "Elektrogerät (2)"],
  ["vvt", "mug", "Equipment (1)"],
  ["vvt", "mug", "Geräte (23)"],
  ["vvt", "mug", "Installation"],
  ["vvt", "mug", "Möbel (243)", "sel"],
  ["vvt", "mug", "Netzwerkgerät"],
  ["vvl", "mug", "Verkaufsablage (166)"],
  ["vl", "gear", "Inventarbauteil"],
  ["=", "chart", "Verbräuche"],
  [" -", "gauge", "Gerät"],
  [" vt", "pulse", "Datenlogger"],
  [" vt", "gauge", "Fühler"],
  [" vt", "pulse", "Kontroller"],
  [" vl", "gauge", "Zähler"],
  [" l", "gear", "Gerätebauteil"],
]);

const rows = [];
["1276", "1277", "1278", "1279", "1280", "1281", "1282", "1283", "1284", "1285", "1293", "1294"]
  .forEach((c) => rows.push(["ITE00000" + c, "Tisch IKEA", "IKEA", "1.2327", false]));
[["1404", "B16"], ["1405", "B16"], ["1406", "B15"], ["1407", "B15"], ["1408", "B14"], ["1409", "B13"], ["1410", "B13"],
 ["1411", "B12"], ["1412", "B11-A"], ["1413", "B10"], ["1414", "TEST3"], ["1415", "TEST3"], ["1416", "B06"], ["1417", "B06"],
 ["1418", "B04"], ["1420", "B05"], ["1421", "B05"], ["1422", "B03"], ["1423", "B03"], ["1424", "B17"], ["1425", "B17"]]
  .forEach(([c, r]) => rows.push(["ITE00000" + c, "Tisch Hem. 150x75", "Hemminger", "17." + r, r !== "B10"]));
rows.push(["4023500081092", "Schreibtisch", "", "17.B05", true]);
rows.push(["ITE000001476", "Schrank Hem. 90x60x220", "Hemminger", "17.B17", false]);

const cell = (ic, text, cls = "") =>
  `<td class="${cls}"><div>${text ? (ic ? icon(ic) : "") + `<span class="t">${text}</span>` : ""}</div></td>`;

document.getElementById("rows").innerHTML = rows.map(([code, name, maker, room, desk]) => {
  const sel = code === "ITE000001406";
  return `<tr class="${sel ? "sel" : ""}"><td><span class="cb ${sel ? "on" : ""}">${sel ? icon("check") : ""}</span></td>` +
    cell("mug", "Möbel") + cell("", code) + cell("", name) + cell("box", name, "cur") + cell("people", maker) +
    cell("building", "BLN01-017 : Ge…") + cell("room", room) +
    cell("monitor", desk ? "BLN01-017 : 17.…" : "") + cell("bulb", "wird genutzt") + "</tr>";
}).join("");
```
